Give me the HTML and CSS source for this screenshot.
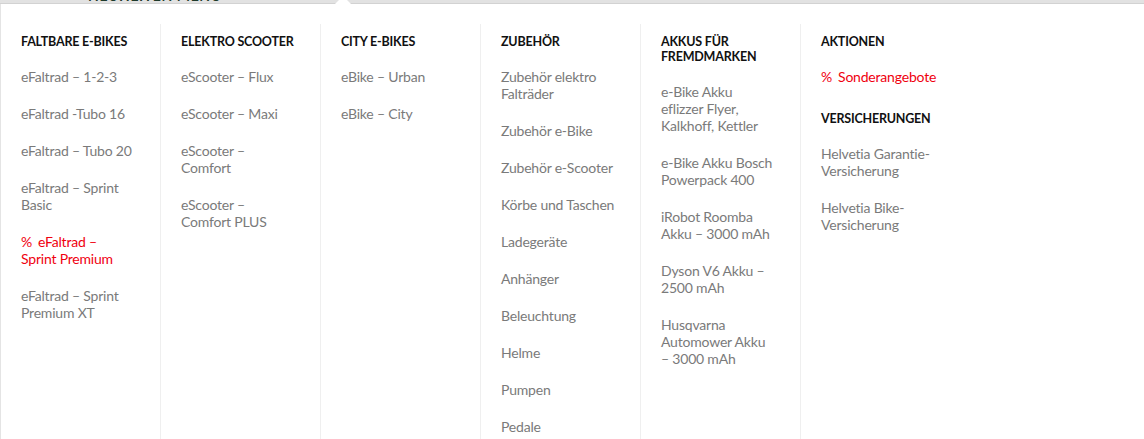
FILE: index.html
```html
<!DOCTYPE html>
<html lang="de">
<head>
<meta charset="utf-8">
<link rel="stylesheet" href="styles.css">
</head>
<body>
<div class="topbar">
  <span class="toplabel">Neuheiten menü</span>
  <span class="notch"></span>
</div>
<div class="mega">
  <div class="col">
    <h3>Faltbare E-Bikes</h3>
    <ul>
      <li>eFaltrad – 1-2-3</li>
      <li>eFaltrad -Tubo 16</li>
      <li>eFaltrad – Tubo 20</li>
      <li>eFaltrad – Sprint Basic</li>
      <li class="sale"><span class="pct">%</span>eFaltrad – Sprint Premium</li>
      <li>eFaltrad – Sprint Premium XT</li>
    </ul>
  </div>
  <div class="col">
    <h3>Elektro Scooter</h3>
    <ul>
      <li>eScooter – Flux</li>
      <li>eScooter – Maxi</li>
      <li>eScooter – Comfort</li>
      <li>eScooter – Comfort PLUS</li>
    </ul>
  </div>
  <div class="col">
    <h3>City E-Bikes</h3>
    <ul>
      <li>eBike – Urban</li>
      <li>eBike – City</li>
    </ul>
  </div>
  <div class="col">
    <h3>Zubehör</h3>
    <ul>
      <li>Zubehör elektro Falträder</li>
      <li>Zubehör e-Bike</li>
      <li>Zubehör e-Scooter</li>
      <li>Körbe und Taschen</li>
      <li>Ladegeräte</li>
      <li>Anhänger</li>
      <li>Beleuchtung</li>
      <li>Helme</li>
      <li>Pumpen</li>
      <li>Pedale</li>
    </ul>
  </div>
  <div class="col">
    <h3>Akkus für Fremdmarken</h3>
    <ul>
      <li>e-Bike Akku eflizzer Flyer, Kalkhoff, Kettler</li>
      <li>e-Bike Akku Bosch Powerpack 400</li>
      <li>iRobot Roomba Akku – 3000 mAh</li>
      <li>Dyson V6 Akku – 2500 mAh</li>
      <li>Husqvarna Automower Akku – 3000 mAh</li>
    </ul>
  </div>
  <div class="col">
    <h3>Aktionen</h3>
    <ul>
      <li class="sale"><span class="pct">%</span>Sonderangebote</li>
    </ul>
    <h3 class="sub">Versicherungen</h3>
    <ul>
      <li>Helvetia Garantie-Versicherung</li>
      <li>Helvetia Bike-Versicherung</li>
    </ul>
  </div>
</div>
</body>
</html>
```
FILE: styles.css
```css
html, body {
  margin: 0;
  padding: 0;
  background: #fff;
  font-family: "Lato", "Noto Sans", sans-serif;
  overflow: hidden;
}

.topbar {
  position: relative;
  height: 3px;
  background: #e2e2e2;
  border-bottom: 1px solid #d2d2d2;
}

.toplabel {
  position: absolute;
  left: 88px;
  top: -12px;
  height: 15px;
  overflow: hidden;
  font-size: 14px;
  font-weight: 700;
  text-transform: uppercase;
  color: #1e3a2a;
  line-height: 15px;
  letter-spacing: 0.6px;
}

.notch {
  position: absolute;
  left: 335px;
  top: -4px;
  width: 0;
  height: 0;
  border-left: 8px solid transparent;
  border-right: 8px solid transparent;
  border-bottom: 8px solid #fff;
}

.mega {
  display: flex;
  align-items: stretch;
  padding-top: 20px;
  border-left: 1px solid #e4e4e4;
  min-height: 420px;
}

.col {
  width: 114px;
  flex: 0 0 114px;
  padding: 10px 25px 0 20px;
  border-left: 1px solid #efefef;
}

.col:first-child {
  border-left: 0;
  padding-left: 20px;
  padding-right: 25px;
}

.col h3 {
  margin: 0;
  font-size: 12.5px;
  line-height: 15px;
  font-weight: 700;
  text-transform: uppercase;
  color: #111;
  letter-spacing: -0.2px;
}

.col h3.sub {
  margin-top: 26px;
}

.col ul {
  list-style: none;
  margin: -1px 0 0;
  padding: 0;
}

.col li {
  margin-top: 20px;
  font-size: 14px;
  line-height: 17px;
  color: #7a7a7a;
  letter-spacing: -0.2px;
}

.col li.sale {
  color: #f0000f;
}

.pct {
  margin-right: 6px;
}
```
